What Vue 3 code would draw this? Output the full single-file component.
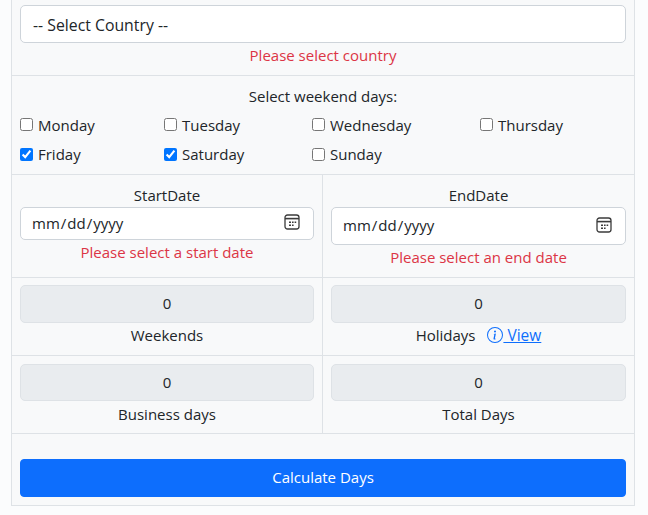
<template>
  <div class="page">
    <form class="card" @submit.prevent>
      <section class="row country">
        <select v-model="country" class="control">
          <option value="">-- Select Country --</option>
        </select>
        <p class="error">Please select country</p>
      </section>

      <section class="row weekend">
        <p class="weekend-title">Select weekend days:</p>
        <div class="day-grid">
          <label v-for="day in days" :key="day.name" class="day">
            <input v-model="day.checked" type="checkbox" />
            <span>{{ day.name }}</span>
          </label>
        </div>
      </section>

      <section class="split dates">
        <div class="cell">
          <label class="cell-label">StartDate</label>
          <div class="date-wrap">
            <input type="date" class="control date start" />
            <svg class="calendar-icon" viewBox="0 0 16 16" fill="none">
              <rect x="1" y="1" width="14" height="14" rx="2.5" stroke="#3b3b3b" stroke-width="1.3" />
              <path d="M1 4.6h14" stroke="#3b3b3b" stroke-width="1.6" />
              <path d="M5 7.5h2v1.6H5zM8 7.5h1.6v1.6H8zM10.6 7.5h1.6v1.6h-1.6zM5 10.4h2V12H5zM8 10.4h1.6V12H8z" fill="#3b3b3b" />
            </svg>
          </div>
          <p class="error">Please select a start date</p>
        </div>
        <div class="cell">
          <label class="cell-label">EndDate</label>
          <div class="date-wrap">
            <input type="date" class="control date" />
            <svg class="calendar-icon" viewBox="0 0 16 16" fill="none">
              <rect x="1" y="1" width="14" height="14" rx="2.5" stroke="#3b3b3b" stroke-width="1.3" />
              <path d="M1 4.6h14" stroke="#3b3b3b" stroke-width="1.6" />
              <path d="M5 7.5h2v1.6H5zM8 7.5h1.6v1.6H8zM10.6 7.5h1.6v1.6h-1.6zM5 10.4h2V12H5zM8 10.4h1.6V12H8z" fill="#3b3b3b" />
            </svg>
          </div>
          <p class="error">Please select an end date</p>
        </div>
      </section>

      <section class="split totals">
        <div class="cell">
          <input class="control readonly" value="0" disabled />
          <p class="total-label">Weekends</p>
        </div>
        <div class="cell">
          <input class="control readonly" value="0" disabled />
          <p class="total-label">
            Holidays
            <a href="#" class="view-link" @click.prevent>
              <svg class="info-icon" viewBox="0 0 16 16" fill="currentColor">
                <path d="M8 15A7 7 0 1 1 8 1a7 7 0 0 1 0 14m0 1A8 8 0 1 0 8 0a8 8 0 0 0 0 16" />
                <path d="m8.93 6.588-2.29.287-.082.38.45.083c.294.07.352.176.288.469l-.738 3.468c-.194.897.105 1.319.808 1.319.545 0 1.178-.252 1.465-.598l.088-.416c-.2.176-.492.246-.686.246-.275 0-.375-.193-.304-.533zM9 4.5a1 1 0 1 1-2 0 1 1 0 0 1 2 0" />
              </svg><span class="view-text"> View</span>
            </a>
          </p>
        </div>
      </section>

      <section class="split totals last">
        <div class="cell">
          <input class="control readonly" value="0" disabled />
          <p class="total-label">Business days</p>
        </div>
        <div class="cell">
          <input class="control readonly" value="0" disabled />
          <p class="total-label">Total Days</p>
        </div>
      </section>

      <section class="actions">
        <button type="submit" class="calculate">Calculate Days</button>
      </section>
    </form>
  </div>
</template>

<script setup>
import { reactive, ref } from 'vue'

const country = ref('')

const days = reactive([
  { name: 'Monday', checked: false },
  { name: 'Tuesday', checked: false },
  { name: 'Wednesday', checked: false },
  { name: 'Thursday', checked: false },
  { name: 'Friday', checked: true },
  { name: 'Saturday', checked: true },
  { name: 'Sunday', checked: false },
])
</script>

<style>
body {
  background: #fbfcfd;
}
</style>

<style scoped>
.page {
  width: 648px;
  height: 515px;
  box-sizing: border-box;
  padding-left: 11px;
  overflow: hidden;
  font-family: "Open Sans", "Noto Sans", sans-serif;
  font-size: 15px;
  color: #212529;
}

.card {
  width: 624px;
  box-sizing: border-box;
  background: #f8f9fa;
  border: 1px solid #dee2e6;
  border-top: none;
}

p {
  margin: 0;
}

.row {
  padding: 0 8px;
  border-bottom: 1px solid #dee2e6;
  box-sizing: content-box;
}

.country {
  height: 70px;
  padding-top: 5px;
}

.control {
  display: block;
  width: 100%;
  height: 38px;
  box-sizing: border-box;
  padding: 6px 12px;
  border: 1px solid #ced4da;
  border-radius: 5px;
  background: #fff;
  color: #212529;
  font-family: inherit;
  font-size: 15px;
  appearance: none;
}

select.control {
  padding-top: 7px;
  padding-bottom: 5px;
  font-size: 15.8px;
}

.error {
  margin-top: 1px;
  height: 22px;
  line-height: 22px;
  text-align: center;
  color: #dc3545;
}

.weekend {
  height: 98px;
}

.weekend-title {
  padding-top: 9px;
  height: 22px;
  line-height: 22px;
  text-align: center;
}

.day-grid {
  display: grid;
  grid-template-columns: 144px 148px 168px 1fr;
  grid-auto-rows: 29.5px;
  margin-top: 3px;
}

.day {
  display: flex;
  align-items: center;
  gap: 5px;
}

.day input {
  width: 13px;
  height: 13px;
  margin: 0;
}

.split {
  display: grid;
  grid-template-columns: 310px 1fr;
  border-bottom: 1px solid #dee2e6;
  box-sizing: content-box;
}

.dates {
  height: 102px;
}

.totals {
  height: 77px;
}

.cell {
  padding: 0 8px;
  text-align: center;
}

.cell + .cell {
  border-left: 1px solid #dee2e6;
}

.cell-label {
  display: block;
  padding-top: 9px;
  height: 23px;
  line-height: 22px;
}

.date-wrap {
  position: relative;
}

.date {
  padding: 4px 12px 6px 10px;
}

.date::-webkit-calendar-picker-indicator {
  opacity: 0;
}

.date.start {
  height: 33px;
}

.calendar-icon {
  position: absolute;
  top: 50%;
  right: 14px;
  width: 16px;
  height: 16px;
  margin-top: -1.5px;
  transform: translateY(-50%);
  pointer-events: none;
}

.totals .cell {
  padding-top: 7px;
}

.totals.last .cell {
  padding-top: 8px;
}

.readonly {
  padding-top: 5px;
  padding-bottom: 7px;
  background: #e9ecef;
  border-color: #dee2e6;
  text-align: center;
  opacity: 1;
}

.totals.last .readonly {
  height: 37px;
}

.total-label {
  margin-top: 1px;
  height: 22px;
  line-height: 22px;
}

.totals.last .total-label {
  margin-top: 2px;
}

.view-link {
  margin-left: 8px;
  color: #0d6efd;
}

.info-icon {
  width: 16px;
  height: 16px;
  vertical-align: -2px;
}

.view-text {
  white-space: pre;
  font-size: 15.5px;
}

.actions {
  height: 71px;
  box-sizing: border-box;
  padding: 25px 8px 0;
}

.calculate {
  display: block;
  width: 100%;
  height: 38px;
  padding: 0 0 2px;
  border: 1px solid #0d6efd;
  border-radius: 4px;
  background: #0d6efd;
  color: #fff;
  font-family: inherit;
  font-size: 15px;
}
</style>
